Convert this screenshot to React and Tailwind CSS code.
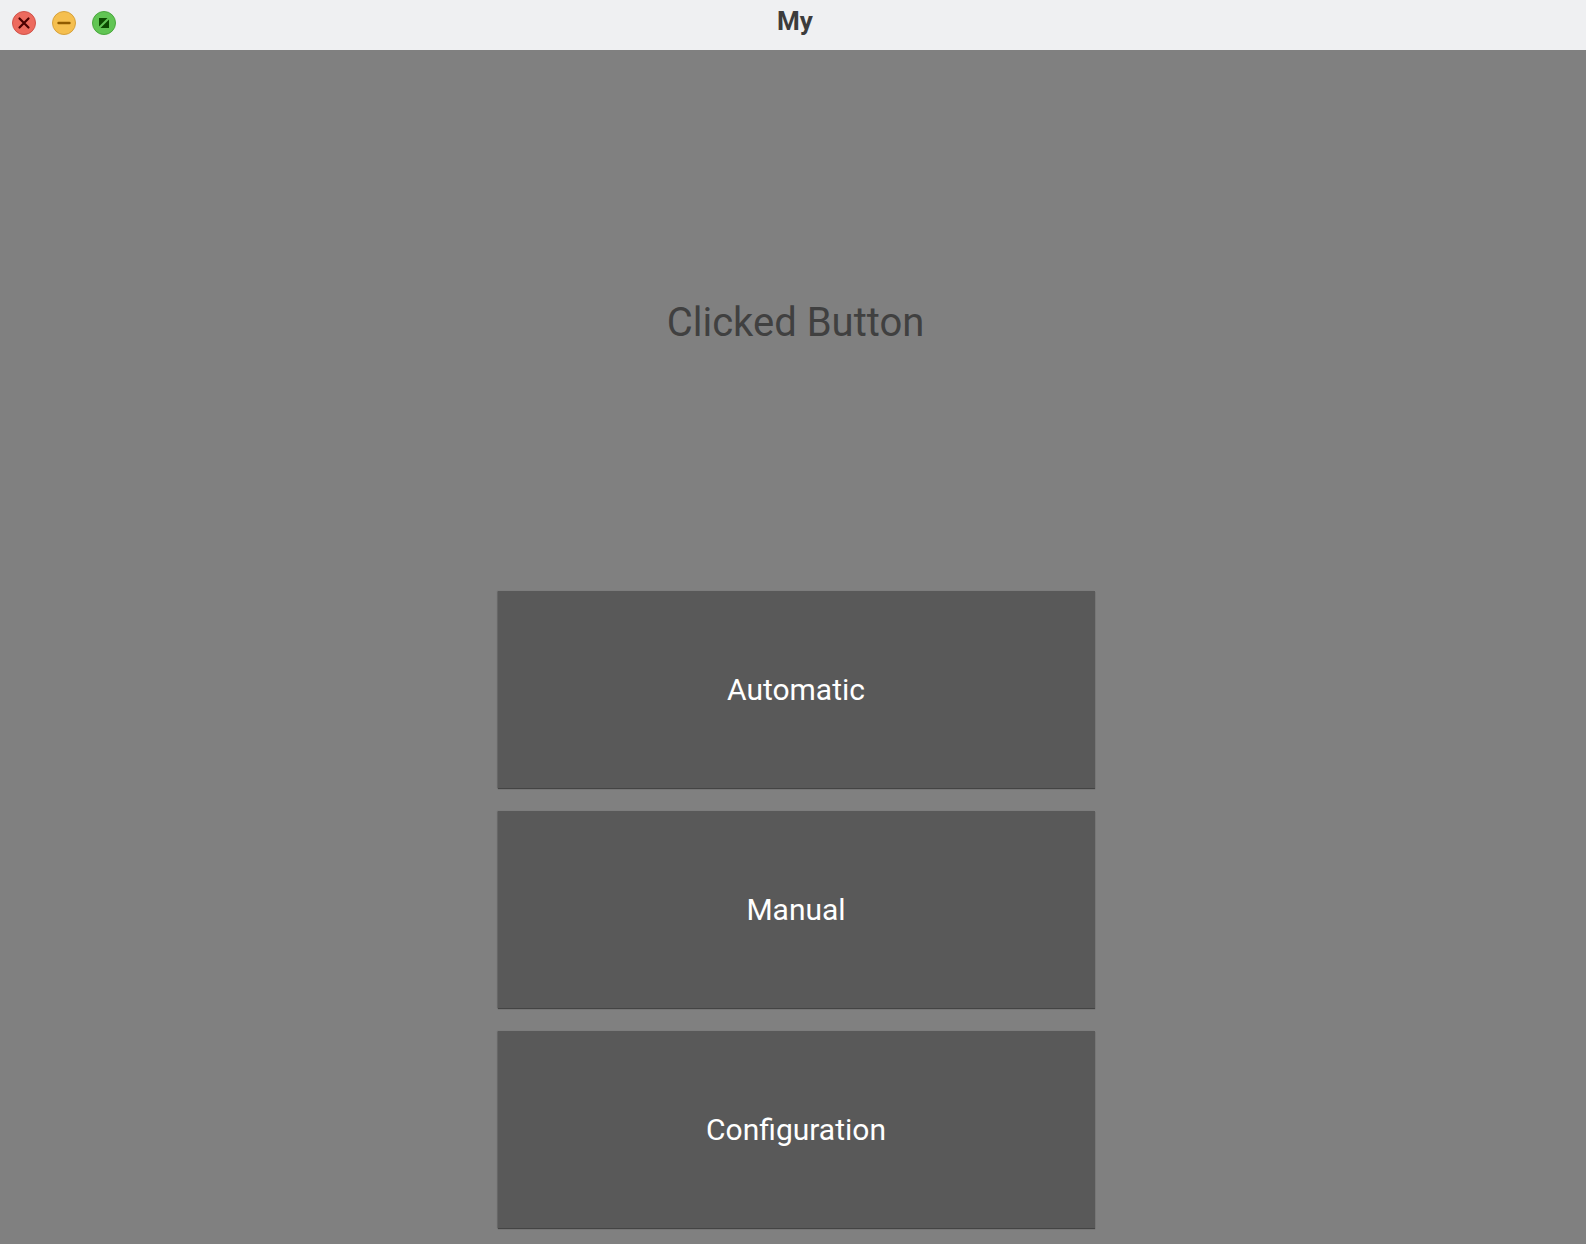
import React, { useState } from 'react';

const font = { fontFamily: 'Roboto, "Noto Sans", sans-serif' };

const TrafficLights = () => (
  <div className="flex items-center gap-4 pl-3 pb-[4px]">
    <svg width="24" height="24" viewBox="0 0 24 24">
      <circle cx="12" cy="12" r="11.5" fill="#ed6a5e" stroke="#d0534a" />
      <path d="M7.5 7.5 L16.5 16.5 M16.5 7.5 L7.5 16.5" stroke="#4d0000" strokeWidth="2.2" strokeLinecap="round" />
    </svg>
    <svg width="24" height="24" viewBox="0 0 24 24">
      <circle cx="12" cy="12" r="11.5" fill="#f5bf4f" stroke="#d6a13c" />
      <path d="M6.5 12 L17.5 12" stroke="#8f5a00" strokeWidth="2.4" strokeLinecap="round" />
    </svg>
    <svg width="24" height="24" viewBox="0 0 24 24">
      <circle cx="12" cy="12" r="11.5" fill="#61c554" stroke="#4aa73e" />
      <path d="M7 7 L15.5 7 L7 15.5 Z" fill="#0b4a00" />
      <path d="M17 17 L8.5 17 L17 8.5 Z" fill="#0b4a00" />
    </svg>
  </div>
);

const App = () => {
  const [clicked, setClicked] = useState('Clicked Button');

  const buttons = ['Automatic', 'Manual', 'Configuration'];

  return (
    <div className="w-[1586px] h-[1244px] flex flex-col bg-[#808080] overflow-hidden" style={font}>
      {/* Title bar */}
      <div className="relative h-[50px] shrink-0 bg-[#eff0f2] flex items-center">
        <TrafficLights />
        <div className="absolute inset-0 flex items-center justify-center pointer-events-none pl-[4px]">
          <span className="text-[26px] font-bold text-[#3c3c3c] leading-none pb-[8px]">My</span>
        </div>
      </div>

      {/* Status label */}
      <div className="flex-1 flex items-center justify-center pl-[5px] pt-[4px]">
        <span className="text-[40px] text-[#404040] leading-none">{clicked}</span>
      </div>

      {/* Buttons */}
      <div className="flex flex-col items-center gap-[23px] pb-[16px] pl-[6px]">
        {buttons.map((label) => (
          <button
            key={label}
            onClick={() => setClicked(label)}
            className="w-[597px] h-[197px] bg-[#595959] text-white text-[30px] shadow-[0_1px_1px_rgba(0,0,0,0.45),-1px_0_1px_rgba(0,0,0,0.12)] flex items-center justify-center"
          >
            {label}
          </button>
        ))}
      </div>
    </div>
  );
};

export default App;
